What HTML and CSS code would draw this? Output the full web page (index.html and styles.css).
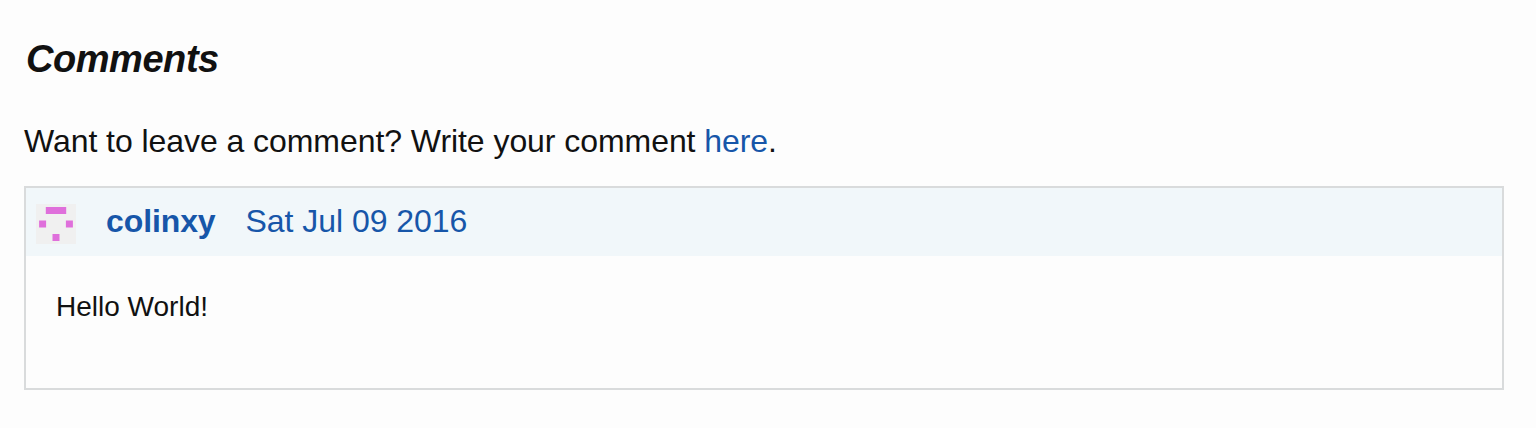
FILE: index.html
```html
<!DOCTYPE html>
<html lang="en">
<head>
<meta charset="utf-8">
<title>Comments</title>
<link rel="stylesheet" href="styles.css">
</head>
<body>
<section class="comments">
  <h2 class="comments-title">Comments</h2>
  <p class="comments-prompt">Want to leave a comment? Write your comment <a class="link" href="#">here</a>.</p>
  <article class="comment">
    <header class="comment-header">
      <svg class="avatar" viewBox="0 0 40 40" aria-hidden="true">
        <rect width="40" height="40" fill="#f0f0f0"/>
        <path fill="#df6fdb" d="M9.8 3.1h20.4v7H9.8zM3.1 16.5h7v7h-7zM29.9 16.5h7v7h-7zM16.5 29.9h7v7h-7z"/>
      </svg>
      <a class="link author" href="#">colinxy</a>
      <a class="link date" href="#">Sat Jul 09 2016</a>
    </header>
    <p class="comment-body">Hello World!</p>
  </article>
</section>
</body>
</html>
```
FILE: styles.css
```css
* { box-sizing: border-box; }
body { margin: 0; background: #fdfdfd; color: #111; font-family: "Liberation Sans", Arial, sans-serif; }
.comments { padding: 37px 32px 0 24px; }
.comments-title { margin: 0; padding-left: 2px; font-size: 38px; line-height: 44px; font-style: italic; font-weight: 700; letter-spacing: -0.45px; }
.comments-prompt { margin: 37px 0 0; font-size: 32px; line-height: 46px; letter-spacing: -0.06px; white-space: nowrap; }
.link { color: #1756a9; text-decoration: none; }
.comment { margin-top: 22px; height: 204px; border: 2px solid #d9dbdc; }
.comment-header { display: flex; height: 68px; padding: 0 10px; background: #f1f7fa; font-size: 32px; line-height: 66px; white-space: nowrap; }
.avatar { width: 40px; height: 40px; margin-top: 16px; flex: none; }
.author { margin-left: 30px; font-weight: 700; letter-spacing: -0.1px; }
.date { margin-left: 30px; letter-spacing: -0.05px; }
.comment-body { margin: 33px 30px 0; font-size: 28px; line-height: 36px; }
```
